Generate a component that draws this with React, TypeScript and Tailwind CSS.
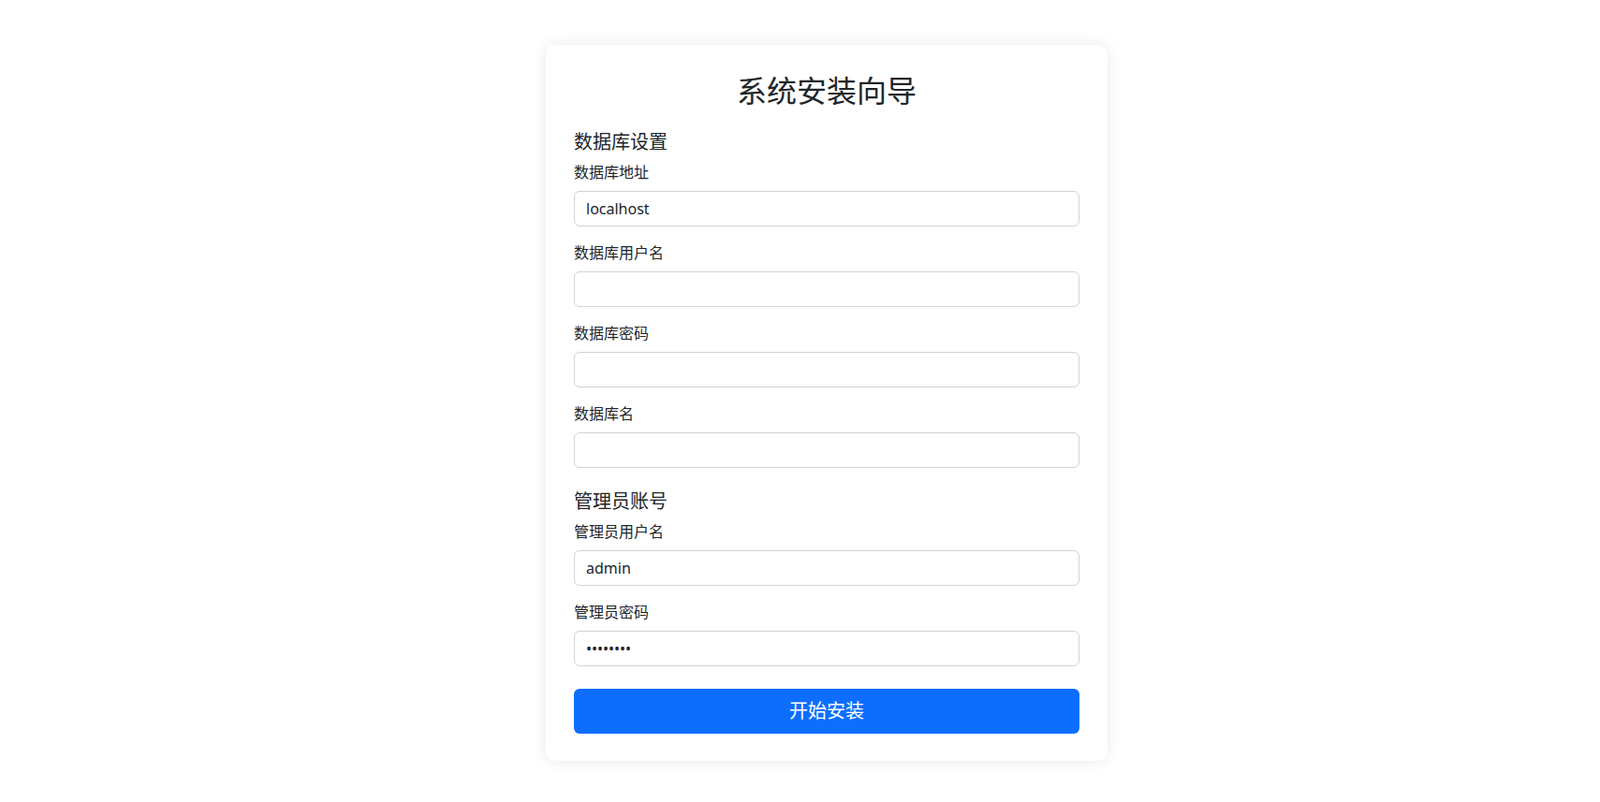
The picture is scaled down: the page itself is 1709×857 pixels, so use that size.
import React, { useState } from 'react';

type Field = {
  id: string;
  label: string;
  type: 'text' | 'password';
  initial: string;
};

const dbFields: Field[] = [
  { id: 'db_host', label: '数据库地址', type: 'text', initial: 'localhost' },
  { id: 'db_user', label: '数据库用户名', type: 'text', initial: '' },
  { id: 'db_pass', label: '数据库密码', type: 'password', initial: '' },
  { id: 'db_name', label: '数据库名', type: 'text', initial: '' },
];

const adminFields: Field[] = [
  { id: 'admin_user', label: '管理员用户名', type: 'text', initial: 'admin' },
  { id: 'admin_pass', label: '管理员密码', type: 'password', initial: 'admin123' },
];

function FormField({
  field,
  value,
  onChange,
  last,
}: {
  field: Field;
  value: string;
  onChange: (id: string, v: string) => void;
  last?: boolean;
}): React.JSX.Element {
  return (
    <div className={last ? 'mb-6' : 'mb-4'}>
      <label htmlFor={field.id} className="block mb-2 text-[16px] leading-6 text-[#212529]">
        {field.label}
      </label>
      <input
        id={field.id}
        type={field.type}
        value={value}
        onChange={(e) => onChange(field.id, e.target.value)}
        className="block w-full h-[38px] px-3 py-1.5 text-[16px] leading-6 text-[#212529] bg-white border border-[#ced4da] rounded-[6px] outline-none focus:border-[#86b7fe]"
      />
    </div>
  );
}

export default function App(): React.JSX.Element {
  const [values, setValues] = useState<Record<string, string>>(() => {
    const init: Record<string, string> = {};
    [...dbFields, ...adminFields].forEach((f) => {
      init[f.id] = f.initial;
    });
    return init;
  });

  function handleChange(id: string, v: string): void {
    setValues((prev) => ({ ...prev, [id]: v }));
  }

  return (
    <div
      className="min-h-screen bg-white pt-[48px] pl-[57px] flex justify-center items-start"
      style={{ fontFamily: '"Noto Sans", "Noto Sans CJK SC", sans-serif' }}
    >
      <div className="w-[600px] bg-white rounded-[10px] shadow-[0_0_16px_rgba(0,0,0,0.09)] px-[30px] pt-[30px] pb-[29px]">
        {/* Title */}
        <h2 className="text-center text-[32px] leading-[38px] font-normal text-[#212529] mb-6">
          系统安装向导
        </h2>

        <form onSubmit={(e) => e.preventDefault()}>
          {/* Database settings */}
          <h5 className="text-[20px] leading-6 font-normal text-[#212529] mb-2">数据库设置</h5>
          {dbFields.map((f, i) => (
            <FormField
              key={f.id}
              field={f}
              value={values[f.id]}
              onChange={handleChange}
              last={i === dbFields.length - 1}
            />
          ))}

          {/* Admin account */}
          <h5 className="text-[20px] leading-6 font-normal text-[#212529] mb-2">管理员账号</h5>
          {adminFields.map((f) => (
            <FormField key={f.id} field={f} value={values[f.id]} onChange={handleChange} />
          ))}

          <button
            type="submit"
            className="mt-[24px] block w-full h-[48px] rounded-[6px] bg-[#0d6efd] hover:bg-[#0b5ed7] text-white text-[20px] leading-[30px] transition-colors"
          >
            开始安装
          </button>
        </form>
      </div>
    </div>
  );
}
